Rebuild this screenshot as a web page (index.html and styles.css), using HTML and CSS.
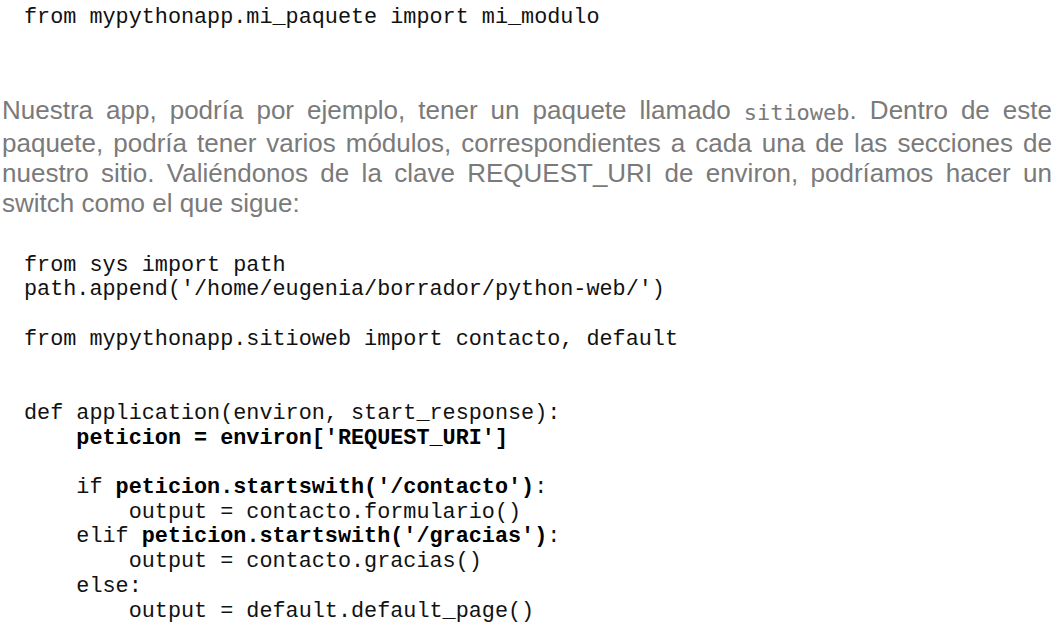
FILE: index.html
```html
<!DOCTYPE html>
<html lang="es">
<head>
<meta charset="utf-8">
<link rel="stylesheet" href="styles.css">
</head>
<body>
<pre class="code code-top">from mypythonapp.mi_paquete import mi_modulo</pre>
<p class="text">Nuestra app, podría por ejemplo, tener un paquete llamado <code class="inline">sitioweb</code>. Dentro de este paquete, podría tener varios módulos, correspondientes a cada una de las secciones de nuestro sitio. Valiéndonos de la clave REQUEST_URI de environ, podríamos hacer un switch como el que sigue:</p>
<pre class="code code-main">from sys import path
path.append('/home/eugenia/borrador/python-web/')

from mypythonapp.sitioweb import contacto, default


def application(environ, start_response):
    <b>peticion = environ['REQUEST_URI']</b>

    if <b>peticion.startswith('/contacto')</b>:
        output = contacto.formulario()
    elif <b>peticion.startswith('/gracias')</b>:
        output = contacto.gracias()
    else:
        output = default.default_page()</pre>
</body>
</html>
```
FILE: styles.css
```css
html, body {
  margin: 0;
  padding: 0;
  background: #ffffff;
}
body {
  padding: 0 1px 0 2px;
}
.code {
  font-family: "Liberation Mono", monospace;
  font-size: 21.8px;
  line-height: 24.7px;
  color: #111111;
  margin: 0;
  padding-left: 22px;
}
.code b {
  font-weight: bold;
  color: #000000;
}
.code-top {
  padding-top: 6px;
}
.text {
  font-family: "Liberation Sans", Arial, sans-serif;
  font-size: 26px;
  line-height: 30px;
  color: #7a7a7a;
  text-align: justify;
  margin: 64px 0 36px 0;
}
.inline {
  font-family: "DejaVu Sans Mono", monospace;
  font-size: 22px;
  vertical-align: -1px;
  color: #7a7a7a;
}
```
